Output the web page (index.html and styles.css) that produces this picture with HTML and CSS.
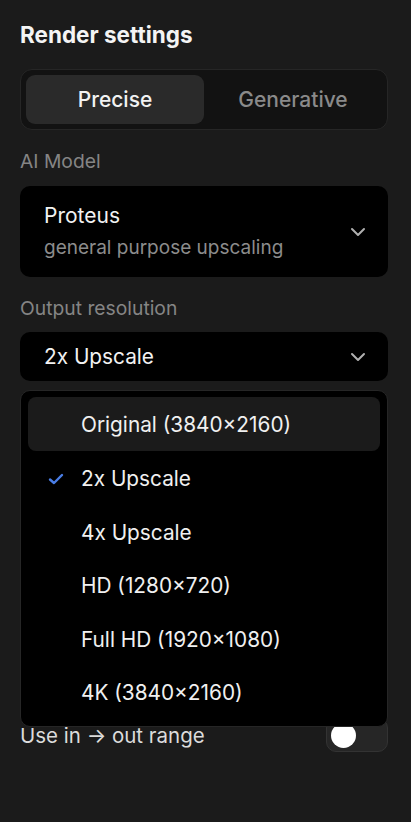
FILE: index.html
```html
<!DOCTYPE html>
<html>
<head>
<meta charset="utf-8">
<link rel="stylesheet" href="styles.css">
</head>
<body>
<div class="panel">
  <h1 class="title">Render settings</h1>
  <div class="segment">
    <div class="seg-btn active">Precise</div>
    <div class="seg-btn">Generative</div>
  </div>

  <div class="label">AI Model</div>
  <div class="select tall">
    <div class="select-text">
      <div class="model-name">Proteus</div>
      <div class="model-desc">general purpose upscaling</div>
    </div>
    <svg class="chev" width="16" height="10" viewBox="0 0 16 10"><path d="M2 2 L8 8 L14 2" fill="none" stroke="#b0b0b0" stroke-width="2" stroke-linecap="round" stroke-linejoin="round"/></svg>
  </div>

  <div class="label">Output resolution</div>
  <div class="res-wrap">
    <div class="select short">
      <div class="select-value">2x Upscale</div>
      <svg class="chev" width="16" height="10" viewBox="0 0 16 10"><path d="M2 2 L8 8 L14 2" fill="none" stroke="#b0b0b0" stroke-width="2" stroke-linecap="round" stroke-linejoin="round"/></svg>
    </div>
    <div class="menu">
      <div class="item hover">Original (3840×2160)</div>
      <div class="item selected">
        <svg class="check" width="16" height="12" viewBox="0 0 16 12"><path d="M2 6.5 L6 10 L14 2" fill="none" stroke="#4a7ee6" stroke-width="2.4" stroke-linecap="round" stroke-linejoin="round"/></svg>
        2x Upscale</div>
      <div class="item">4x Upscale</div>
      <div class="item">HD (1280×720)</div>
      <div class="item">Full HD (1920×1080)</div>
      <div class="item">4K (3840×2160)</div>
    </div>
  </div>

  <div class="row">
    <div class="row-label">Use in → out range</div>
    <div class="toggle"><div class="knob"></div></div>
  </div>
</div>
</body>
</html>
```

FILE: styles.css
```css
html, body {
  margin: 0;
  padding: 0;
  background: #1b1b1b;
  font-family: Inter, "Noto Sans", sans-serif;
  color: #fff;
}
.panel {
  padding: 21px 23px 0 20px;
  height: 822px;
  box-sizing: border-box;
}
.title {
  margin: 0;
  font-size: 22.5px;
  line-height: 28px;
  font-weight: 700;
  color: #f4f4f4;
}
.segment {
  margin-top: 20px;
  display: flex;
  height: 61px;
  box-sizing: border-box;
  padding: 5px;
  background: #121212;
  border: 1px solid #262626;
  border-radius: 12px;
}
.seg-btn {
  flex: 1;
  display: flex;
  align-items: center;
  justify-content: center;
  font-size: 21px;
  font-weight: 500;
  color: #8a8a8a;
  border-radius: 9px;
}
.seg-btn.active {
  background: #2a2a2a;
  color: #f2f2f2;
}
.label {
  margin-top: 19px;
  font-size: 19.3px;
  line-height: 24px;
  color: #858585;
}
.select {
  margin-top: 13px;
  background: #000;
  border-radius: 10px;
  display: flex;
  align-items: center;
  padding: 0 22px 0 24px;
  box-sizing: border-box;
}
.select.tall { height: 91px; }
.select.short { height: 49px; margin-top: 12px; }
.select-text { flex: 1; }
.model-name {
  font-size: 21px;
  line-height: 26px;
  color: #f2f2f2;
}
.model-desc {
  margin-top: 7px;
  font-size: 19px;
  line-height: 24px;
  color: #8c8c8c;
}
.select-value {
  flex: 1;
  font-size: 20.8px;
  color: #f2f2f2;
}
.chev { display: block; }
.res-wrap { position: relative; }
.menu {
  position: absolute;
  top: 58px;
  left: 0;
  right: 0;
  height: 337px;
  box-sizing: border-box;
  background: #000;
  border: 1px solid #262626;
  border-radius: 10px;
  padding: 6px 7px 0 7px;
  z-index: 2;
}
.item {
  height: 53.5px;
  display: flex;
  align-items: center;
  padding-left: 53px;
  font-size: 20.8px;
  color: #f0f0f0;
  border-radius: 8px;
  position: relative;
}
.item.hover {
  background: #1b1b1b;
  height: 54px;
  margin-bottom: 1px;
}
.check {
  position: absolute;
  left: 20px;
  top: 21px;
}
.row {
  margin-top: 337px;
  display: flex;
  align-items: center;
  justify-content: space-between;
}
.row-label {
  font-size: 20.5px;
  color: #dcdcdc;
}
.toggle {
  width: 62px;
  height: 34px;
  box-sizing: border-box;
  border-radius: 10px;
  background: #262626;
  border: 1px solid #333;
  position: relative;
}
.knob {
  position: absolute;
  left: 4px;
  top: 4px;
  width: 25px;
  height: 25px;
  border-radius: 50%;
  background: #fff;
}
```
